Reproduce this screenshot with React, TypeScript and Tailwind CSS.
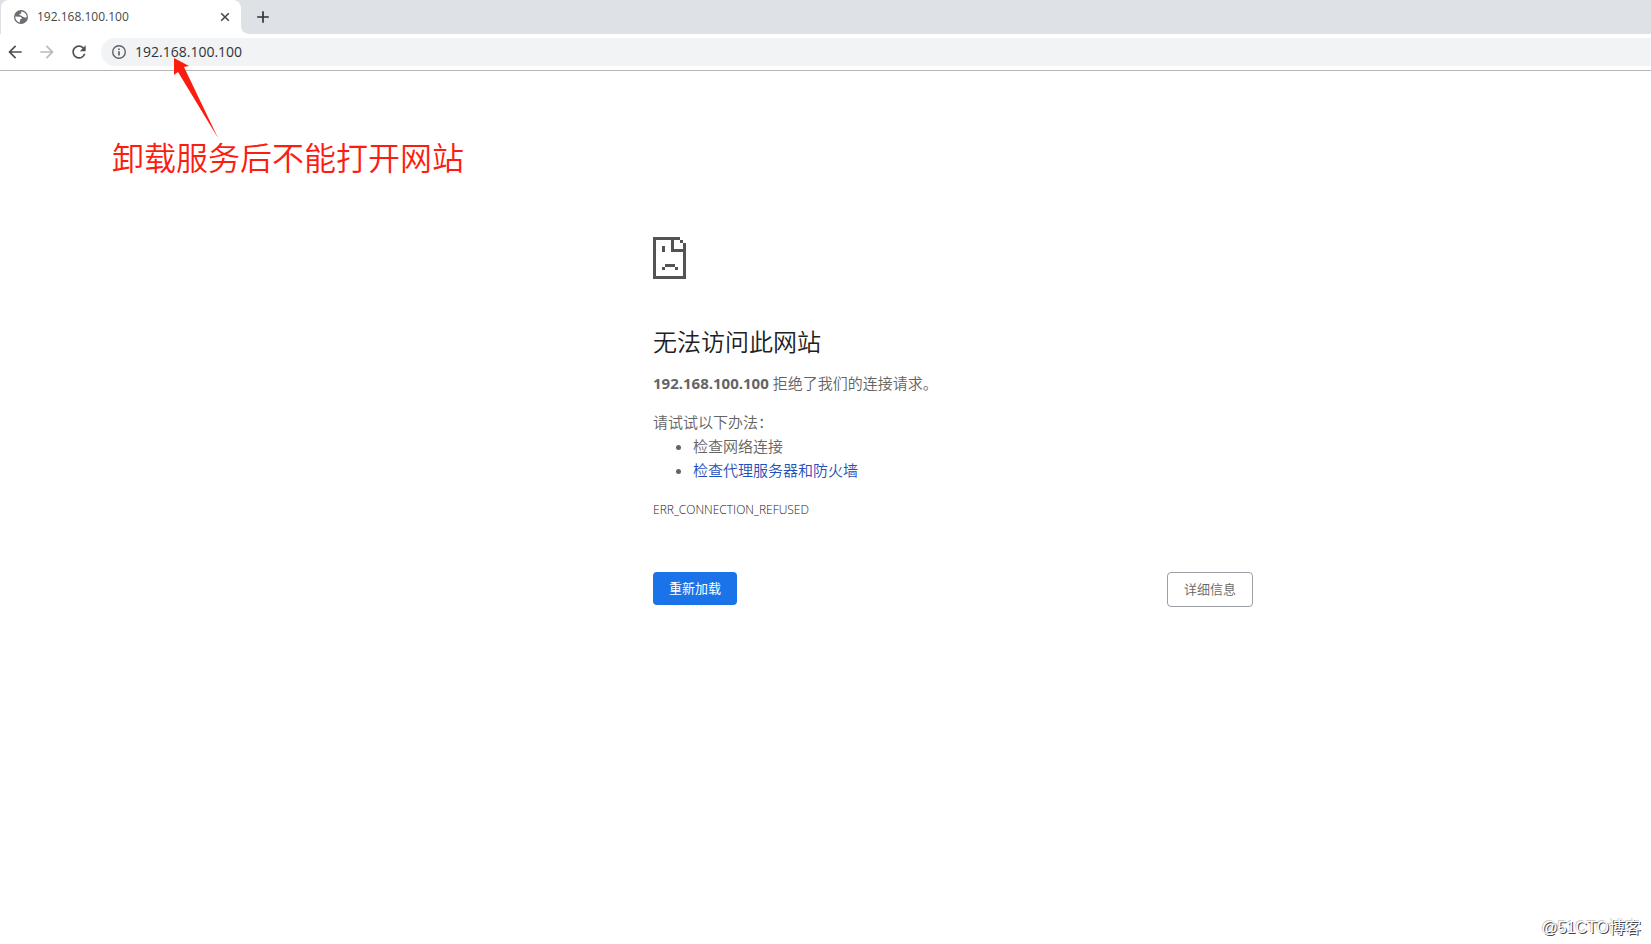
import React from 'react';
import { MdAdd, MdArrowBack, MdArrowForward, MdRefresh } from 'react-icons/md';

const HOST = '192.168.100.100';

function GlobeIcon() {
  return (
    <svg viewBox="0 0 16 16" className="h-4 w-4" aria-hidden="true">
      <circle cx="8" cy="8" r="7" fill="#6b6e72" />
      {/* Land */}
      <path
        d="M2.2 7.6L7 7.7C8.2 8 8.9 8.8 8.8 9.8L7.2 10.4L6.8 13.4C4.2 13 2.2 10.8 2.2 7.6ZM8.2 2.6C11.4 2.8 13.7 5 13.8 8.1L12.4 8.8L11.2 8.2L9.4 7.4L8 6.6L6.4 6.1L6.6 4.9L8.2 4.4Z"
        fill="#fff"
      />
    </svg>
  );
}

function InfoIcon() {
  return (
    <svg viewBox="0 0 16 16" className="h-4 w-4" fill="none" stroke="#5f6368" aria-hidden="true">
      <circle cx="8" cy="8" r="6.3" strokeWidth="1.4" />
      <path d="M8 7.2V11.5M8 4.4V6" strokeWidth="1.7" />
    </svg>
  );
}

function CloseIcon() {
  return (
    <svg viewBox="0 0 16 16" className="h-4 w-4" fill="none" stroke="currentColor" aria-hidden="true">
      <path d="M4.2 4.2L11.8 11.8M11.8 4.2L4.2 11.8" strokeWidth="1.6" />
    </svg>
  );
}

function TabStrip() {
  return (
    <div className="flex h-[34px] bg-white">
      <div className="w-[241px] bg-[#dee1e6] pl-px">
        <div className="flex h-full items-center rounded-t-lg bg-white pl-3 pr-2">
          <GlobeIcon />
          <span className="ml-2 flex-1 text-xs text-[#45494d]">{HOST}</span>
          <button type="button" aria-label="关闭" className="text-[#45494d]">
            <CloseIcon />
          </button>
        </div>
      </div>
      <div className="flex flex-1 items-center rounded-bl-lg bg-[#dee1e6] pl-3">
        <button type="button" aria-label="打开新的标签页" className="text-[#2f3337]">
          <MdAdd className="h-5 w-5" />
        </button>
      </div>
    </div>
  );
}

function Toolbar() {
  return (
    <div className="flex h-[37px] items-center border-b border-[#b4b6b8] bg-white pl-[5px]">
      <div className="flex items-center gap-3">
        <button type="button" aria-label="后退" className="text-[#4d5156]">
          <MdArrowBack className="h-5 w-5" />
        </button>
        <button type="button" aria-label="前进" className="text-[#b9bbbd]">
          <MdArrowForward className="h-5 w-5" />
        </button>
        <button type="button" aria-label="重新加载此页" className="text-[#4d5156]">
          <MdRefresh className="h-5 w-5" />
        </button>
      </div>
      <div className="ml-3 flex h-7 flex-1 items-center rounded-l-full bg-[#f1f3f4] pl-2.5">
        <InfoIcon />
        <input
          type="text"
          aria-label="地址栏"
          defaultValue={HOST}
          className="ml-2 min-w-0 flex-1 bg-transparent text-sm text-[#2f3337] outline-none"
        />
      </div>
    </div>
  );
}

function SadPage() {
  return (
    <svg viewBox="0 0 99 126" className="h-[42px] w-[33px] fill-[#535353]" shapeRendering="crispEdges" aria-hidden="true">
      {/* Sheet outline */}
      <path d="M0 0H81V9H63V36H99V126H0ZM9 9V117H90V45H54V9Z" fillRule="evenodd" />
      {/* Folded corner */}
      <path d="M81 9H90V18H99V36H90V18H81Z" />
      {/* Face */}
      <path d="M27 27H36V45H27ZM36 81H66V90H36ZM27 90H36V99H27ZM66 90H75V99H66Z" />
    </svg>
  );
}

function ErrorPage() {
  return (
    <main className="ml-[653px] max-w-[600px] pt-[166px] text-[15px] leading-6 font-[350] text-[#646464]">
      <SadPage />
      <h1 className="mt-[47px] text-2xl leading-8 font-[350] text-[#202124]">无法访问此网站</h1>
      <p className="mt-[13px]">
        <strong className="font-bold">{HOST}</strong> 拒绝了我们的连接请求。
      </p>
      <div className="mt-[15px]">
        <p>请试试以下办法：</p>
        <ul className="list-disc pl-10">
          <li>检查网络连接</li>
          <li>
            <a href="#proxy" className="text-[#1f4fb8]">检查代理服务器和防火墙</a>
          </li>
        </ul>
      </div>
      <div className="mt-4 text-xs leading-6 font-light text-[#222]">ERR_CONNECTION_REFUSED</div>
      <div className="mt-[50px] flex items-start justify-between text-[13px] leading-[17px]">
        <button type="button" className="rounded bg-[#1a73e8] px-4 py-2 font-normal text-white">重新加载</button>
        <button type="button" className="rounded border border-[#9aa0a6] px-4 py-2">详细信息</button>
      </div>
    </main>
  );
}

function Annotation() {
  return (
    <div className="pointer-events-none absolute top-[57px] left-28 text-[#fb1d10]">
      <svg viewBox="0 0 46 81" className="ml-[61px] h-[81px] w-[46px] fill-current" aria-hidden="true">
        <path d="M1 1L16 9L11 10L45 81L5 15L1 18Z" />
      </svg>
      <p className="text-[32px] leading-10 font-[350] whitespace-nowrap">卸载服务后不能打开网站</p>
    </div>
  );
}

export default function App() {
  return (
    <div className="relative min-h-screen overflow-hidden bg-white font-['Open_Sans','Noto_Sans_CJK_SC',sans-serif]">
      <TabStrip />
      <Toolbar />
      <ErrorPage />
      <Annotation />
      <div className="absolute right-2.5 bottom-1 font-['Liberation_Sans','Noto_Sans_CJK_SC',sans-serif] text-base leading-6 text-white [text-shadow:1px_1px_0_#444,-1px_-1px_0_#ccc]">
        @51CTO博客
      </div>
    </div>
  );
}
